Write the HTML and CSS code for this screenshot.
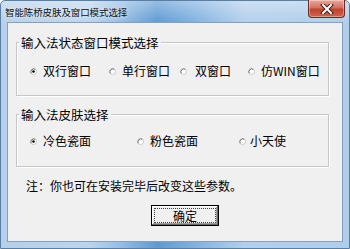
FILE: index.html
```html
<!DOCTYPE html>
<html lang="zh-CN">
<head>
<meta charset="utf-8">
<title>智能陈桥皮肤及窗口模式选择</title>
<link rel="stylesheet" href="styles.css">
</head>
<body>
<div class="window">
  <div class="titlebar">
    <span class="title">智能陈桥皮肤及窗口模式选择</span>
    <span class="close">
      <svg width="14" height="10" viewBox="0 0 14 10"><path d="M3 1 L11 9 M11 1 L3 9" stroke="#3a2020" stroke-width="4" stroke-linecap="square"/><path d="M3 1 L11 9 M11 1 L3 9" stroke="#ffffff" stroke-width="2" stroke-linecap="square"/></svg>
    </span>
  </div>
  <div class="client">
    <fieldset class="group g1">
      <legend>输入法状态窗口模式选择</legend>
      <div class="row r1">
        <label class="opt"><svg class="radio" width="7" height="7" viewBox="0 0 7 7"><circle cx="3.5" cy="3.5" r="3" fill="#fff" stroke="#c8c8c8"/><path d="M1.2 5.2 A3 3 0 0 1 5.2 1.2" fill="none" stroke="#707070"/><circle cx="3.5" cy="3.5" r="1.3" fill="#000"/></svg><span>双行窗口</span></label>
        <label class="opt"><svg class="radio" width="7" height="7" viewBox="0 0 7 7"><circle cx="3.5" cy="3.5" r="3" fill="#fff" stroke="#c8c8c8"/><path d="M1.2 5.2 A3 3 0 0 1 5.2 1.2" fill="none" stroke="#707070"/></svg><span>单行窗口</span></label>
        <label class="opt wide"><svg class="radio" width="7" height="7" viewBox="0 0 7 7"><circle cx="3.5" cy="3.5" r="3" fill="#fff" stroke="#c8c8c8"/><path d="M1.2 5.2 A3 3 0 0 1 5.2 1.2" fill="none" stroke="#707070"/></svg><span>双窗口</span></label>
        <label class="opt"><svg class="radio" width="7" height="7" viewBox="0 0 7 7"><circle cx="3.5" cy="3.5" r="3" fill="#fff" stroke="#c8c8c8"/><path d="M1.2 5.2 A3 3 0 0 1 5.2 1.2" fill="none" stroke="#707070"/></svg><span>仿WIN窗口</span></label>
      </div>
    </fieldset>
    <fieldset class="group g2">
      <legend>输入法皮肤选择</legend>
      <div class="row r2">
        <label class="opt"><svg class="radio" width="7" height="7" viewBox="0 0 7 7"><circle cx="3.5" cy="3.5" r="3" fill="#fff" stroke="#c8c8c8"/><path d="M1.2 5.2 A3 3 0 0 1 5.2 1.2" fill="none" stroke="#707070"/><circle cx="3.5" cy="3.5" r="1.3" fill="#000"/></svg><span>冷色瓷面</span></label>
        <label class="opt"><svg class="radio" width="7" height="7" viewBox="0 0 7 7"><circle cx="3.5" cy="3.5" r="3" fill="#fff" stroke="#c8c8c8"/><path d="M1.2 5.2 A3 3 0 0 1 5.2 1.2" fill="none" stroke="#707070"/></svg><span>粉色瓷面</span></label>
        <label class="opt narrow"><svg class="radio" width="7" height="7" viewBox="0 0 7 7"><circle cx="3.5" cy="3.5" r="3" fill="#fff" stroke="#c8c8c8"/><path d="M1.2 5.2 A3 3 0 0 1 5.2 1.2" fill="none" stroke="#707070"/></svg><span>小天使</span></label>
      </div>
    </fieldset>
    <p class="note">注：你也可在安装完毕后改变这些参数。</p>
    <div class="actions">
      <button class="ok" type="button"><span class="focus">确定</span></button>
    </div>
  </div>
</div>
</body>
</html>
```

FILE: styles.css
```css
html, body {
  margin: 0;
  padding: 0;
  width: 350px;
  height: 249px;
  overflow: hidden;
  background: #ffffff;
}

.window {
  box-sizing: border-box;
  width: 350px;
  height: 249px;
  display: flex;
  flex-direction: column;
  border: 1px solid #5a7fa5;
  border-radius: 5px 5px 0 0;
  background:
    linear-gradient(to bottom, rgba(255,255,255,0.35) 0, rgba(255,255,255,0) 22px),
    linear-gradient(to right, #b7d0ea 0%, #bcd5ee 25%, #9cc1e6 33%, #5e9ad2 45%, #7fb0df 55%, #b3cfec 70%, #b0cdea 100%);
  font-family: "Noto Sans CJK SC", "Noto Sans", sans-serif;
  color: #000;
}

.titlebar {
  height: 21px;
  display: flex;
  align-items: flex-start;
  justify-content: space-between;
  flex: none;
}

.title {
  font-size: 9.5px;
  line-height: 12px;
  margin: 5px 0 0 4px;
  color: #111;
  letter-spacing: -0.1px;
  text-shadow: 0 0 4px rgba(255,255,255,0.9);
}

.close {
  width: 35px;
  height: 17px;
  margin-right: 4px;
  margin-top: -1px;
  border: 1px solid #6b2a2a;
  border-top: none;
  border-radius: 0 0 4px 4px;
  background: linear-gradient(to bottom, #e9a99d 0%, #d4715f 45%, #c0432d 55%, #d0644c 100%);
  display: flex;
  align-items: center;
  justify-content: center;
  box-shadow: inset 0 0 0 1px rgba(255,255,255,0.35);
}

.client {
  flex: 1;
  margin: 0 6px 6px 6px;
  border: 1px solid #84a0bd;
  background: #f0f0f0;
  padding: 12px 13px 0 8px;
  font-size: 12px;
}

.group {
  margin: 0;
  padding: 0;
  border: 1px solid #c6c6c6;
  box-shadow: inset 1px 1px 0 #ffffff, 1px 1px 0 #ffffff;
  border-radius: 0;
}

.group legend {
  margin-left: 2px;
  padding: 0 2px;
  font-size: 12.5px;
  line-height: 15px;
}

.g2 {
  margin-top: 11px;
}

.row {
  display: grid;
  height: 14px;
  align-items: center;
  padding-left: 13px;
}

.r1 {
  margin-top: 14px;
  margin-bottom: 17px;
  grid-template-columns: 79px 71px 68px auto;
}

.r2 {
  margin-top: 12px;
  margin-bottom: 18px;
  grid-template-columns: 107px 102px auto;
}

.opt {
  display: flex;
  align-items: center;
  gap: 6px;
  line-height: 14px;
  white-space: nowrap;
}

.opt.wide {
  gap: 8px;
}

.opt.narrow {
  gap: 4px;
}

.radio {
  flex: none;
  display: block;
}

.note {
  margin: 11px 0 0 10px;
  line-height: 15px;
  font-size: 12px;
}

.actions {
  display: flex;
  margin-top: 12px;
  padding-left: 135px;
}

.ok {
  box-sizing: border-box;
  width: 68px;
  height: 21px;
  padding: 2px;
  border: 1px solid #000;
  background: #f0f0f0;
  box-shadow: inset -1px -1px 0 #696969, inset 1px 1px 0 #ffffff, inset -2px -2px 0 #a0a0a0;
  font-family: "Noto Sans CJK SC", sans-serif;
  font-size: 12px;
  color: #000;
  display: flex;
}

.focus {
  flex: 1;
  border: 1px dotted #404040;
  line-height: 13px;
  display: flex;
  align-items: center;
  justify-content: center;
}
```
